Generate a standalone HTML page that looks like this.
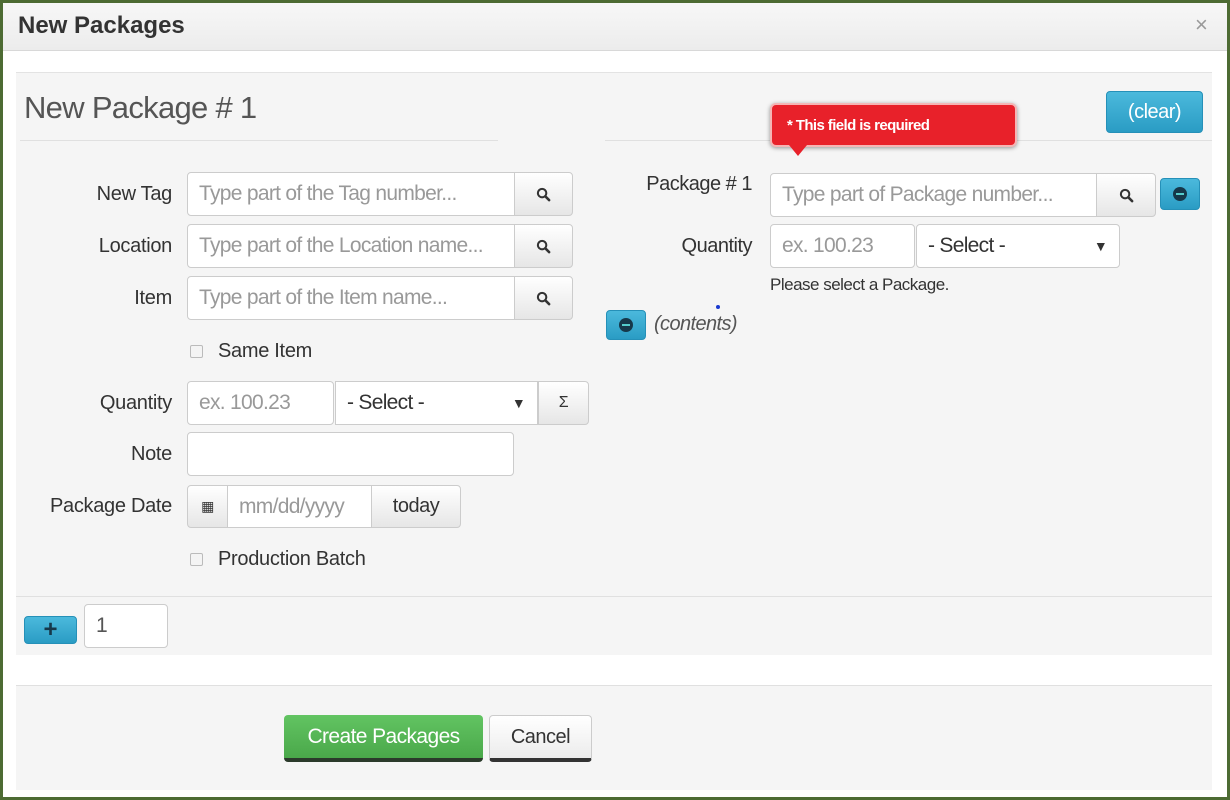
<!DOCTYPE html>
<html><head><meta charset="utf-8"><style>
*{box-sizing:border-box;margin:0;padding:0}
body{width:1230px;height:800px;background:#fff;font-family:"Liberation Sans",sans-serif;color:#333;position:relative;overflow:hidden}
.a{position:absolute}
.frame{left:0;top:0;width:1230px;height:800px;border:3px solid #4d6b33}
.hdr{left:3px;top:3px;width:1224px;height:48px;background:linear-gradient(#f7f7f7,#ececec);border-bottom:1px solid #d8d8d8}
.lbl{font-size:20px;letter-spacing:-0.3px;color:#333;text-align:right;width:160px;left:12px}
.in{background:#fff;border:1px solid #ccc;border-radius:4px;font-size:21px;letter-spacing:-0.7px;color:#999;padding-left:11px;display:flex;align-items:center;white-space:nowrap;overflow:hidden}
.btn{background:linear-gradient(#fff,#e6e6e6);border:1px solid #ccc;border-radius:0 4px 4px 0;display:flex;align-items:center;justify-content:center;font-size:20px;letter-spacing:-0.5px;color:#333}
.cb{width:13px;height:13px;border:1px solid #bbb;background:#f4f4f4;border-radius:2px}
.blue{background:linear-gradient(#4bb9dc,#2a9cc4);border:1px solid #2590b8;border-radius:4px;color:#fff;display:flex;align-items:center;justify-content:center}
.dot{width:14px;height:14px;border-radius:50%;background:#16384a;position:relative}
.dot:after{content:"";position:absolute;left:3px;top:6px;width:8px;height:2px;background:#5cc}
</style></head><body>
<svg width="0" height="0" style="position:absolute"><defs><symbol id="mg" viewBox="0 0 16 16"><circle cx="6.5" cy="6.5" r="4.5" fill="none" stroke="#333" stroke-width="2.2"/><path d="M10 10L14 14" stroke="#333" stroke-width="2.8" stroke-linecap="round"/></symbol></defs></svg>
<div class="a hdr"></div>
<div class="a" style="left:18px;top:12px;font-size:24px;font-weight:bold;letter-spacing:0px;color:#333">New Packages</div>
<div class="a" style="left:1195px;top:12px;font-size:22px;color:#999">×</div>

<div class="a" style="left:16px;top:72px;width:1196px;height:583px;background:#f5f5f5;border-top:1px solid #e3e3e3"></div>
<div class="a" style="left:24px;top:90px;font-size:31px;letter-spacing:-0.7px;color:#555">New Package # 1</div>
<div class="a" style="left:20px;top:140px;width:478px;height:1px;background:#e0e0e0"></div>
<div class="a" style="left:605px;top:140px;width:607px;height:1px;background:#e0e0e0"></div>

<div class="a lbl" style="top:183px">New Tag</div>
<div class="a in" style="left:187px;top:172px;width:328px;height:44px;border-radius:4px 0 0 4px">Type part of the Tag number...</div>
<div class="a btn" style="left:514px;top:172px;width:59px;height:44px"><svg width="15" height="15"><use href="#mg"/></svg></div>
<div class="a lbl" style="top:235px">Location</div>
<div class="a in" style="left:187px;top:224px;width:328px;height:44px;border-radius:4px 0 0 4px">Type part of the Location name...</div>
<div class="a btn" style="left:514px;top:224px;width:59px;height:44px"><svg width="15" height="15"><use href="#mg"/></svg></div>
<div class="a lbl" style="top:287px">Item</div>
<div class="a in" style="left:187px;top:276px;width:328px;height:44px;border-radius:4px 0 0 4px">Type part of the Item name...</div>
<div class="a btn" style="left:514px;top:276px;width:59px;height:44px"><svg width="15" height="15"><use href="#mg"/></svg></div>

<div class="a cb" style="left:190px;top:345px"></div>
<div class="a" style="left:218px;top:340px;font-size:20px;letter-spacing:-0.3px">Same Item</div>

<div class="a lbl" style="top:392px">Quantity</div>
<div class="a in" style="left:187px;top:381px;width:147px;height:44px">ex. 100.23</div>
<div class="a in" style="left:335px;top:381px;width:203px;height:44px;color:#333;border-radius:0">- Select -<span style="position:absolute;right:12px;font-size:14px">▼</span></div>
<div class="a btn" style="left:538px;top:381px;width:51px;height:44px;font-size:16px">Σ</div>

<div class="a lbl" style="top:443px">Note</div>
<div class="a in" style="left:187px;top:432px;width:327px;height:44px"></div>

<div class="a lbl" style="top:495px">Package Date</div>
<div class="a btn" style="left:187px;top:485px;width:41px;height:43px;border-radius:4px 0 0 4px;font-size:14px">▦</div>
<div class="a in" style="left:227px;top:485px;width:145px;height:43px;border-radius:0">mm/dd/yyyy</div>
<div class="a btn" style="left:371px;top:485px;width:90px;height:43px">today</div>

<div class="a cb" style="left:190px;top:553px"></div>
<div class="a" style="left:218px;top:548px;font-size:20px;letter-spacing:-0.3px">Production Batch</div>

<div class="a" style="left:16px;top:596px;width:1196px;height:1px;background:#e0e0e0"></div>
<div class="a blue" style="left:24px;top:616px;width:53px;height:28px;color:#16384a;font-size:24px;font-weight:bold">+</div>
<div class="a in" style="left:84px;top:604px;width:84px;height:44px;color:#555">1</div>

<div class="a blue" style="left:1106px;top:91px;width:97px;height:42px;font-size:20px;letter-spacing:-0.5px">(clear)</div>
<div class="a" style="left:770px;top:103px;width:247px;height:44px;background:#e8212a;border:2px solid #f5b5b5;border-radius:6px;box-shadow:0 1px 4px rgba(0,0,0,.4);color:#fff;font-size:15px;letter-spacing:-0.6px;font-weight:bold;padding:12px 0 0 15px">* This field is required</div>
<div class="a" style="left:789px;top:145px;width:0;height:0;border-left:9px solid transparent;border-right:9px solid transparent;border-top:11px solid #e8212a"></div>

<div class="a" style="left:600px;top:173px;width:152px;text-align:right;font-size:20px;letter-spacing:-0.5px">Package # 1</div>
<div class="a in" style="left:770px;top:173px;width:327px;height:44px;border-radius:4px 0 0 4px">Type part of Package number...</div>
<div class="a btn" style="left:1096px;top:173px;width:60px;height:44px"><svg width="15" height="15"><use href="#mg"/></svg></div>
<div class="a blue" style="left:1160px;top:178px;width:40px;height:32px"><div class="dot"></div></div>

<div class="a" style="left:600px;top:235px;width:152px;text-align:right;font-size:20px;letter-spacing:-0.5px">Quantity</div>
<div class="a in" style="left:770px;top:224px;width:145px;height:44px">ex. 100.23</div>
<div class="a in" style="left:916px;top:224px;width:204px;height:44px;color:#333">- Select -<span style="position:absolute;right:12px;font-size:14px">▼</span></div>
<div class="a" style="left:770px;top:275px;font-size:17px;letter-spacing:-0.5px;color:#333">Please select a Package.</div>
<div class="a blue" style="left:606px;top:310px;width:40px;height:30px"><div class="dot"></div></div>
<div class="a" style="left:654px;top:313px;font-size:20px;letter-spacing:-0.6px;font-style:italic;color:#555">(contents)</div>
<div class="a" style="left:716px;top:305px;width:4px;height:4px;border-radius:50%;background:#1a3ad0"></div>

<div class="a" style="left:16px;top:685px;width:1196px;height:105px;background:#f5f5f5;border-top:1px solid #e0e0e0"></div>
<div class="a" style="left:284px;top:715px;width:199px;height:47px;background:linear-gradient(#62c462,#4aa84a);border-radius:4px;border-bottom:4px solid #2b3a2b;color:#fff;font-size:21px;letter-spacing:-0.6px;display:flex;align-items:center;justify-content:center">Create Packages</div>
<div class="a" style="left:489px;top:715px;width:103px;height:47px;background:linear-gradient(#fff,#ececec);border:1px solid #ccc;border-radius:4px;border-bottom:4px solid #333;color:#333;font-size:20px;letter-spacing:-0.5px;display:flex;align-items:center;justify-content:center">Cancel</div>

<div class="a frame"></div>
</body></html>
